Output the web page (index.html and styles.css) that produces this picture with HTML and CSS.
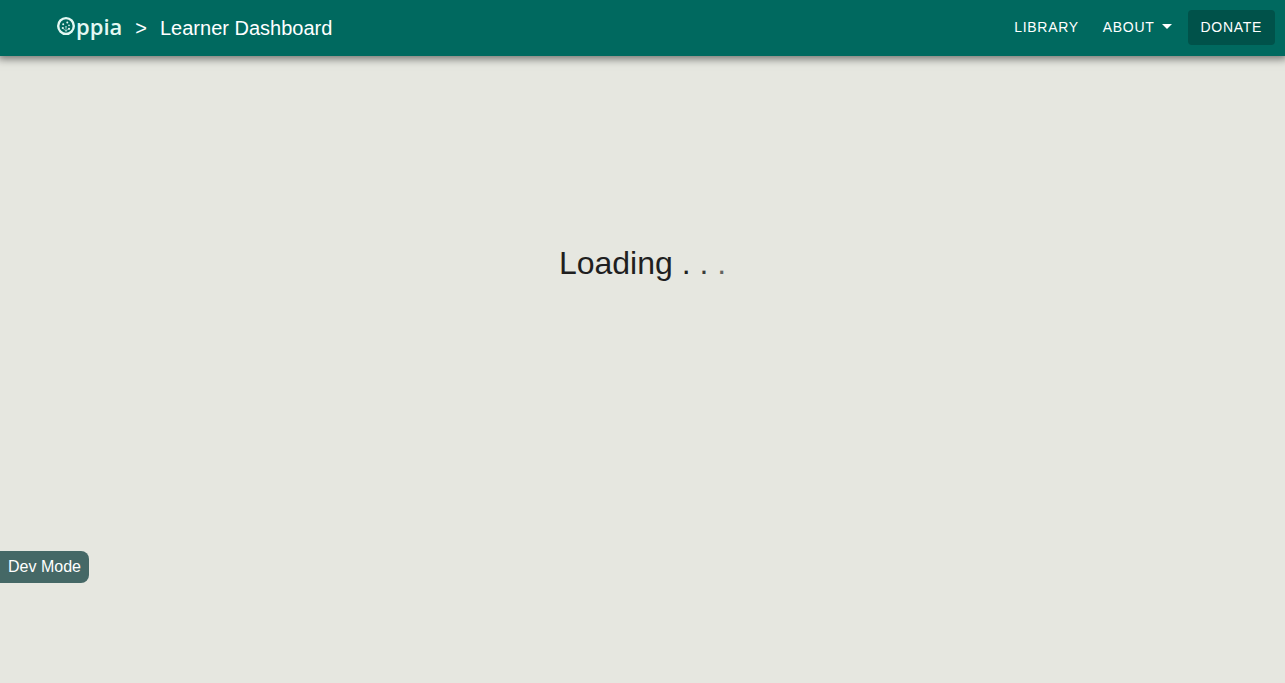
FILE: index.html
```html
<!DOCTYPE html>
<html lang="en">
<head>
  <meta charset="utf-8">
  <meta name="viewport" content="width=device-width, initial-scale=1">
  <title>Learner Dashboard</title>
  <link rel="stylesheet" href="styles.css">
</head>
<body>
  <header class="navbar">
    <a class="logo" href="#" aria-label="Oppia">
      <svg class="logo-mark" viewBox="0 0 20 20" aria-hidden="true">
        <ellipse cx="10" cy="10" rx="7.800" ry="7.900" fill="none" stroke="currentColor" stroke-width="2.400"/>
        <path d="M10 16V11M10 15L7 12.500M10 15L13 12.500" fill="none" stroke="currentColor" stroke-width="0.600"/>
        <circle cx="11.300" cy="6.600" r="1" fill="currentColor"/>
        <circle cx="7.200" cy="8.300" r="1" fill="currentColor"/>
        <circle cx="13" cy="9.400" r="0.800" fill="currentColor"/>
        <circle cx="6.800" cy="12" r="1.100" fill="currentColor"/>
        <circle cx="13" cy="12.800" r="1.100" fill="currentColor"/>
        <circle cx="10" cy="10.800" r="0.700" fill="currentColor"/>
      </svg>
      <span class="logo-text">ppia</span>
    </a>
    <span class="separator">&gt;</span>
    <h1 class="page-title">Learner Dashboard</h1>
    <nav class="nav">
      <a class="nav-link" href="#">LIBRARY</a>
      <button class="nav-link" type="button" aria-haspopup="true">ABOUT<span class="caret"></span></button>
      <a class="nav-link donate" href="#">DONATE</a>
    </nav>
  </header>
  <main class="content">
    <p class="loading">Loading <span>.</span> <span class="dot-second">.</span> <span class="dot-third">.</span></p>
  </main>
  <div class="dev-mode">Dev Mode</div>
</body>
</html>
```
FILE: styles.css
```css
* {
  box-sizing: border-box;
}

body {
  margin: 0;
  min-height: 100vh;
  background: #e6e7e0;
  color: #1f1f1f;
  font-family: "Liberation Sans", Arial, sans-serif;
}

.navbar {
  display: flex;
  align-items: center;
  height: 56px;
  padding: 0 10px 0 56px;
  background: #00695f;
  color: #fff;
  box-shadow: 0 1px 8px 2px rgba(0, 0, 0, 0.5);
}

.logo {
  display: flex;
  align-items: center;
  padding-bottom: 4px;
  color: #e4f8f3;
  text-decoration: none;
}

.logo-mark {
  width: 20px;
  height: 20px;
}

.logo-text {
  font: 600 22px/28px "Open Sans", sans-serif;
}

.separator {
  margin-left: 13px;
  font-size: 20px;
}

.page-title {
  margin: 0 auto 0 13px;
  font-size: 20px;
  font-weight: 400;
}

.nav {
  display: flex;
  align-items: center;
  padding-bottom: 2px;
}

.nav-link {
  display: flex;
  align-items: center;
  height: 35px;
  padding: 0 12px;
  border: 0;
  border-radius: 4px;
  background: none;
  color: #fff;
  font: 14px/20px "Liberation Sans", Arial, sans-serif;
  letter-spacing: 0.05em;
  text-decoration: none;
}

.caret {
  margin: 0 0 2px 7px;
  border: 5px solid transparent;
  border-top-color: #fff;
  border-bottom: 0;
}

.donate {
  margin-left: 4px;
  padding: 0 13px;
  background: #00524a;
}

.content {
  padding-top: 184px;
}

.loading {
  margin: 0;
  font-size: 32px;
  line-height: 46px;
  text-align: center;
}

.dot-second {
  opacity: 0.85;
}

.dot-third {
  opacity: 0.65;
}

.dev-mode {
  position: fixed;
  bottom: 100px;
  left: 0;
  padding: 6px 8px;
  border-radius: 0 8px 8px 0;
  background: #456866;
  color: #fff;
  font-size: 16px;
  line-height: 20px;
}
```
